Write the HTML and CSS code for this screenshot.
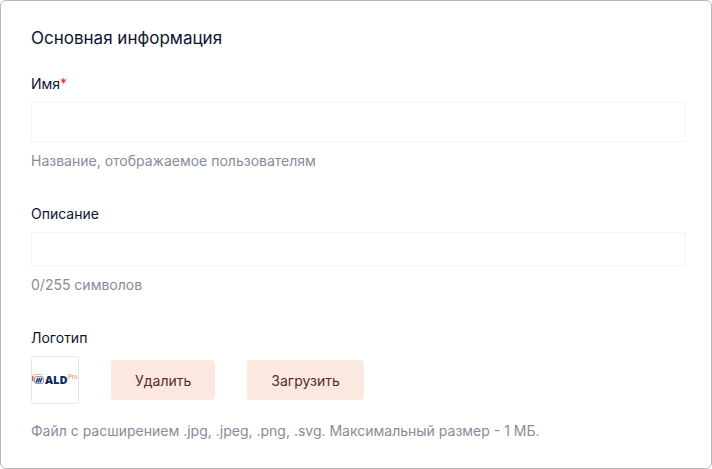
FILE: index.html
```html
<!DOCTYPE html>
<html lang="ru">
<head>
<meta charset="utf-8">
<meta name="viewport" content="width=device-width, initial-scale=1">
<title>Основная информация</title>
<link rel="stylesheet" href="styles.css">
</head>
<body>
<form class="card">
  <h1 class="title">Основная информация</h1>
  <div class="field">
    <label class="label" for="name">Имя<span class="required">*</span></label>
    <input class="input" id="name" type="text" required>
    <p class="hint">Название, отображаемое пользователям</p>
  </div>
  <div class="field">
    <label class="label" for="description">Описание</label>
    <textarea class="input input-short" id="description" rows="1" maxlength="255"></textarea>
    <p class="hint">0/255 символов</p>
  </div>
  <div class="field">
    <span class="label">Логотип</span>
    <div class="logo-row">
      <div class="logo">
        <svg class="logo-image" viewBox="0 0 46 14">
          <path d="M1 9V3.500Q1 1.500 3 1.500H8Q10 1.500 10 2.500" fill="none" stroke="#f9b294" stroke-width="1"/>
          <path d="M0 3H1.300V8H0Z" fill="#f0602e"/>
          <rect x="2.500" y="3.500" width="9" height="7" rx="2" fill="#e8ecf5" stroke="#8e9aba" stroke-width="1"/>
          <path d="M4 9.500L6 5M6 9.500L8 5M8 9.500L10 5" fill="none" stroke="#143066" stroke-width="1.300"/>
          <text class="logo-name" x="13" y="11">ALD</text>
          <text class="logo-suffix" x="36" y="6">Pro</text>
        </svg>
      </div>
      <button class="button" type="button">Удалить</button>
      <button class="button" type="button">Загрузить</button>
    </div>
    <p class="hint hint-file">Файл с расширением .jpg, .jpeg, .png, .svg. Максимальный размер - 1 МБ.</p>
  </div>
</form>
</body>
</html>
```

FILE: styles.css
```css
* {
  box-sizing: border-box;
}

body {
  margin: 0;
  background: #fff;
  color: #0b1533;
  font: 14px/20px Inter, "Liberation Sans", sans-serif;
}

.card {
  display: flex;
  flex-direction: column;
  gap: 32px;
  min-height: 100vh;
  padding: 24px 25px 24px 30px;
  border: 1px solid #b9b9b9;
  border-radius: 6px;
}

.title {
  margin: 0 0 -9px;
  font-size: 17px;
  font-weight: 400;
  line-height: 26px;
}

.field {
  display: flex;
  flex-direction: column;
  gap: 8px;
}

.required {
  color: #f5222d;
}

.input {
  display: block;
  width: 100%;
  height: 40px;
  padding: 6px 12px;
  border: 1px solid #f5f5f5;
  border-radius: 0;
  background: #fff;
  color: inherit;
  font: inherit;
  resize: none;
}

.input-short {
  height: 34px;
}

.hint {
  margin: 0;
  color: #858c9c;
  line-height: 22px;
}

.hint-file {
  margin-top: 8px;
}

.logo-row {
  display: flex;
  align-items: center;
  gap: 32px;
}

.logo {
  display: flex;
  align-items: center;
  width: 48px;
  height: 48px;
  border: 1px solid #e6e6e6;
  border-radius: 4px;
}

.logo-image {
  display: block;
  width: 100%;
}

.logo-name {
  fill: #0c2a63;
  font: 800 11px "Open Sans", sans-serif;
}

.logo-suffix {
  fill: #f58a62;
  font: 500 6px Inter, sans-serif;
}

.button {
  height: 40px;
  padding: 1px 24px 0;
  border: 0;
  border-radius: 4px;
  background: #fbe9df;
  color: #572a30;
  font: inherit;
}
```
